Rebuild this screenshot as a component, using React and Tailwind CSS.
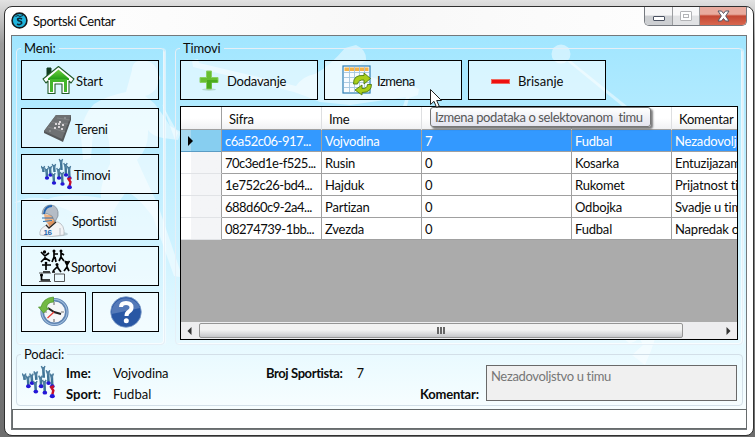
import React from "react";

const ROWS = [
  ["c6a52c06-917...", "Vojvodina", "7", "Fudbal", "Nezadovoljstvo u timu"],
  ["70c3ed1e-f525...", "Rusin", "0", "Kosarka", "Entuzijazam tima"],
  ["1e752c26-bd4...", "Hajduk", "0", "Rukomet", "Prijatnost tima"],
  ["688d60c9-2a4...", "Partizan", "0", "Odbojka", "Svadje u timu"],
  ["08274739-1bb...", "Zvezda", "0", "Fudbal", "Napredak od"],
];
const GRID = "grid grid-cols-[41px_100px_100px_150px_100px_100px]";

function Silhouettes() {
  return (
    <svg className="absolute inset-0" width="734" height="393" viewBox="12 36 734 393">
      <g fill="#fff" fillOpacity="0.48">
        <path d="M132 70 Q132 60 144 60 Q157 63 158 74 Q162 78 159 80 L156 89 Q150 95 145 96 L154 103 Q164 116 170 126 L181 132 L178 140 L163 138 Q152 136 148 130 Q149 148 137 160 Q145 178 158 205 L180 270 L180 277 L174 276 L153 217 Q136 194 126 192 Q116 205 107 224 Q88 222 68 210 Q41 198 14 203 Q27 195 48 199 Q66 192 101 198 Q100 182 110 164 Q111 140 104 124 L93 132 L91 158 L83 160 L81 136 Q82 116 94 104 Q106 96 126 92 Z" />
        <path d="M192 60 L198 59 L199 63 L296 86 Q303 76 315 74 Q330 66 345 48 L356 45 Q367 50 366 61 L354 68 Q374 82 407 84 L419 89 L418 95 L409 98 L407 106 L403 106 L406 97 L350 105 L320 102 L305 96 L294 92 L193 67 Z" />
        <circle cx="561" cy="54" r="9.5" />
        <path d="M567 61 L571 61 L627 106 L622 106 Z" />
        <path d="M640 339 L655 339 Q651 352 645 365 L632 355 L643 345 Z M624 339 L638 339 Q634 343 629 343 Z" />
        <path d="M169 117 L178 133 L175 140 L162 104 Z" />
      </g>
    </svg>
  );
}

function HomeIcon() {
  return (
    <svg width="33" height="30" viewBox="0 0 33 30">
      <defs>
        <linearGradient id="hg" x1="0" y1="0" x2="0" y2="1">
          <stop offset="0" stopColor="#6fd040" /><stop offset="1" stopColor="#1d9a13" />
        </linearGradient>
      </defs>
      <path d="M5 3 H9 V10 L5 13 Z" fill="#123f22" stroke="#123f22" />
      <path d="M6 16 V28.500 H13 V19 H20 V28.500 H27 V16 L29 18 L32 14 L16.500 1.500 L1 14 L4 18 Z" fill="#fff" stroke="#245b2b" strokeWidth="1.100" strokeLinejoin="round" />
      <path d="M16.500 4.500 L27 13.500 V15 H6 V13.500 Z" fill="url(#hg)" />
      <path d="M8 14 H25 V27 H22 V17 H11 V27 H8 Z" fill="#43b52b" />
    </svg>
  );
}

function FieldIcon() {
  return (
    <svg width="30" height="30" viewBox="0 0 30 30">
      <path d="M13 2 L28 2 L28 7 L20 29 L18 28 L1 20 V18 Z" fill="#55585a" />
      <path d="M13 2 L28 2 L19 26 L1 18 Z" fill="#6e7173" />
      <path d="M8 9 L25 11 M14 5 L27 7 M5 14 L22 19" stroke="#858889" strokeWidth=".8" />
      <g fill="#f3eef0">
        {[[13, 11], [17, 9], [20, 12], [16, 14], [12, 15], [19, 16], [16, 11]].map(([x, y]) => (
          <circle key={x + "-" + y} cx={x} cy={y} r="1.100" />
        ))}
      </g>
      <g fill="#aeb1b2"><circle cx="22" cy="5" r=".8" /><circle cx="7" cy="18" r=".8" /></g>
    </svg>
  );
}

function TeamIcon({ size = 32 }) {
  const people = [[2, 9, 14], [5.5, 11, 20], [9, 9, 17], [13, 7, 14], [12.5, 16, 25], [17.5, 11, 20], [20, 2, 12], [21, 15, 26], [24.5, 6, 17], [28, 9, 20]];
  return (
    <svg width={size} height={size} viewBox="0 0 32 32">
      {people.map(([x, a, b]) => (
        <g key={x + "-" + a}>
          <path d={`M${x} ${a} L${x + 0.5} ${b}`} stroke="#3d7396" strokeWidth="2.400" />
          <path d={`M${x - 1.8} ${a - 1} L${x} ${a + 3} L${x + 1.6} ${a - 1}`} fill="none" stroke="#4f7f9f" strokeWidth="1.400" />
          {b > 14 && <ellipse cx={x + 0.5} cy={b} rx="2.200" ry="1.800" fill="#2416d8" />}
        </g>
      ))}
      <path d="M30 20 L27.500 21 L29.500 24 L28.500 28" stroke="#c8102a" strokeWidth="2.300" fill="none" />
      <ellipse cx="28.500" cy="29.300" rx="2.400" ry="2" fill="#2416d8" />
    </svg>
  );
}

function PlayerIcon() {
  return (
    <svg width="30" height="33" viewBox="0 0 30 33">
      <ellipse cx="17" cy="30" rx="12" ry="2.500" fill="#8ea4ac" opacity=".45" />
      <path d="M1 31 Q0 25 6 22 L11 18 L19 18 Q26 21 25 31 Q12 34 1 31 Z" fill="#f2f3f5" stroke="#a9afb5" strokeWidth=".7" />
      <path d="M5 10 L6 17 Q10 22 14 20 L16 12 Z" fill="#efb181" />
      <path d="M9 19 L10 23 L16 18 V16 Z" fill="#de925d" />
      <path d="M7 21 L10 24 L17 18" fill="none" stroke="#2b2622" strokeWidth="1.300" />
      <path d="M3 10 Q4 1 12 1 Q20 2 19 12 L16 18 L13 12 Q8 8 3 10 Z" fill="#b4bcc6" stroke="#76818d" strokeWidth=".7" />
      <path d="M5 10 Q6 2 13 2" fill="none" stroke="#2264af" strokeWidth="1.800" />
      <path d="M3 14 H14 M4 17.500 L13 16.500" stroke="#2a72b5" strokeWidth="1.200" fill="none" />
      <text x="4.500" y="31" fontSize="8" fontWeight="700" fontFamily="Liberation Sans, sans-serif" fill="#1b65ac">16</text>
      <path d="M21 24 V31" stroke="#b8bec5" />
    </svg>
  );
}

function SportsIcon() {
  return (
    <svg width="32" height="34" viewBox="0 0 32 34">
      <g fill="none" stroke="#000" strokeWidth="1.700">
        <path d="M3 3 L7 7 L11 4 M7 6 L7 9 L3 13 M7 9 L12 12" />
        <path d="M16 2 V8 L14 13 M16 5 H20 M17 8 L18 13 M23 1 V8 L21 12 M23 4 L26 6 M23 8 L26 12" />
        <path d="M4 16 H13 M8 15 V21 M5 23 H12 M29 12 V18 L26 22 M27 12 L29 16 L31.500 12 M29 18 L31 22" />
        <path d="M15 22 L19 18 M19 16 L20 19 L23 23 M17 23 H14" />
        <path d="M3.500 25 V31 H12" />
      </g>
      <g fill="#000"><circle cx="6.500" cy="3" r="1.700" /><circle cx="16" cy="2" r="1.500" /><circle cx="23" cy="2" r="1.500" /><circle cx="8" cy="14" r="1.300" /><circle cx="19" cy="15.500" r="1.500" /><circle cx="3.500" cy="26" r="1.500" /></g>
      <path d="M1 24 H13 M1 32.500 H13 M16.500 25 H26.500 V32.500 H16.500 Z" fill="none" stroke="#444" strokeWidth=".9" />
    </svg>
  );
}

function ClockIcon() {
  return (
    <svg width="32" height="32" viewBox="0 0 32 32">
      <circle cx="16.500" cy="16" r="12.300" fill="#f4f6f8" stroke="#5c82b0" strokeWidth="3.600" />
      <circle cx="16.500" cy="16" r="12.600" fill="none" stroke="#9dbbdc" strokeWidth="1.200" />
      <path d="M16 6 V9 M16 23 V26 M6 16 H9 M23 16 H26" stroke="#777" strokeWidth="1.200" />
      <path d="M10 12 L16 16 L23 18" stroke="#222" strokeWidth="2" fill="none" />
      <path d="M16 16 L9.500 22" stroke="#e33b35" strokeWidth="1.300" />
      <path d="M15.500 1 V6 Q9 6 8.500 12 H11 L5.500 17 L.5 11 H3 Q5 2 15.500 1 Z" fill="#72b943" stroke="#4b9228" strokeWidth=".7" />
    </svg>
  );
}

function HelpIcon() {
  return (
    <svg width="32" height="32" viewBox="0 0 32 32">
      <circle cx="16" cy="16" r="15.300" fill="#2957a4" stroke="#7e9cc8" strokeWidth=".8" />
      <path d="M1.500 18 A14.700 14.700 0 0 1 30 12 Q20 14 1.500 18 Z" fill="#5479b8" />
      <path d="M11 11 Q11 7 16 7 Q21.500 7 21.500 11.500 Q21.500 14 19 15.500 Q16.500 17 16.500 20" fill="none" stroke="#fff" strokeWidth="4" />
      <circle cx="16.300" cy="24.700" r="2.500" fill="#fff" />
    </svg>
  );
}

function EditIcon() {
  return (
    <svg width="31" height="32" viewBox="0 0 31 32">
      <rect x="1" y="2" width="27" height="27" fill="#f8fcff" stroke="#2d7eb5" strokeWidth="1.200" />
      <path d="M2.500 3.500 H26.500 V7 H2.500 Z" fill="#f4b145" />
      <path d="M2 8.500 H27 M2 13.500 H27 M2 18.500 H27 M2 23.500 H27 M7.500 3 V28 M12.500 3 V28 M17.500 3 V28 M22.500 3 V28" stroke="#a5c6df" strokeWidth=".9" />
      <path d="M11.500 20 Q11 10.500 22 11.500 V9 L28.500 14.500 L22 20 V16 Q16.500 15.500 15.500 20 Z M29.500 20.500 Q29.500 28.500 20 28.500 V31 L13 26 L20 21 V24.500 Q25 25 25.500 20.500 Z" fill="#a9cf19" stroke="#4e7a10" strokeWidth=".9" strokeLinejoin="round" />
    </svg>
  );
}

function PlusIcon() {
  return (
    <svg width="20" height="21" viewBox="0 0 20 21">
      <ellipse cx="10" cy="19.500" rx="7" ry="1.200" fill="#8fb9a0" opacity=".5" />
      <path d="M7.500 1 H12.500 V7.500 H19 V12.500 H12.500 V19 H7.500 V12.500 H1 V7.500 H7.500 Z" fill="#67bf31" stroke="#8ad166" />
      <path d="M8 10 H18.500 V12.500 H12.500 V18.500 H8 Z" fill="#49ab1c" />
    </svg>
  );
}

function MenuButton({ className, children }) {
  return (
    <button className={`flex h-10 shrink-0 items-center border border-black bg-white/55 text-left [&>span]:pt-[3px] ${className}`}>
      {children}
    </button>
  );
}

function Group({ title, className, children }) {
  return (
    <fieldset className={`relative min-w-0 rounded-[4px] ${className}`}>
      <legend className="ml-[4px] h-4 px-[3px] leading-4 tracking-[-0.15px]">{title}</legend>
      {children}
    </fieldset>
  );
}

function Grid() {
  return (
    <div className="relative mt-[6px] flex h-[234px] w-[558px] flex-col overflow-hidden border border-black bg-[#ababab]">
      <div className={`${GRID} h-[23px] w-[591px] shrink-0 border-b border-[#a0a0a0] bg-gradient-to-b from-white from-50% to-[#f0f1f3] leading-[24px]`}>
        <div className="border-r border-[#a0a0a0]" />
        {["Sifra", "Ime", "", "", "Komentar"].map((h, i) => (
          <div key={i} className="border-r border-[#dedfe1] pl-[7px] tracking-[-0.2px]">{h}</div>
        ))}
      </div>
      {ROWS.map((r, i) => (
        <div key={r[0]} className={`${GRID} h-[22px] w-[591px] shrink-0 leading-[23px] ${i === 0 ? "bg-[#3399ff] text-white" : "bg-white"}`}>
          <div className={`flex items-center border-r border-b pl-[7px] ${i === 0 ? "border-[#5a9cc4] border-r-[#a0a0a0] bg-gradient-to-r from-[#a8daf2] from-25% to-[#87cef0] to-26%" : "border-[#e1e3e6] border-r-[#a0a0a0] bg-gradient-to-r from-white from-25% to-[#f4f5f7] to-26%"}`}>
            {i === 0 && <svg width="6" height="10"><path d="M0 0 L5 5 L0 10 Z" fill="#000" /></svg>}
          </div>
          {r.map((c, j) => (
            <div key={j} className={`h-[22px] overflow-hidden border-r border-b border-[#a0a0a0] whitespace-nowrap ${j === 0 ? "pl-[3px] tracking-[-0.5px]" : j === 4 ? "pl-[3px] tracking-[-0.2px]" : "pl-[3px] tracking-[-0.2px]"}`}>{c}</div>
          ))}
        </div>
      ))}
      <div className="mt-auto flex h-[17px] shrink-0 items-center bg-[#ededef]">
        <svg className="ml-[6px]" width="5" height="8"><path d="M4.500 0 V8 L.5 4 Z" fill="#333" /></svg>
        <div className="ml-[7px] flex h-[15px] w-[484px] items-center justify-center gap-px rounded-[2px] border border-[#959595] bg-gradient-to-b from-[#f2f2f2] from-45% to-[#c5c6c9] to-100%">
          <i className="h-[7px] w-[2px] bg-[#666]" /><i className="h-[7px] w-[2px] bg-[#666]" /><i className="h-[7px] w-[2px] bg-[#666]" />
        </div>
        <svg className="mr-[6px] ml-auto" width="5" height="8"><path d="M.5 0 V8 L4.500 4 Z" fill="#333" /></svg>
      </div>
    </div>
  );
}

function TitleBar() {
  return (
    <div className="flex h-7 shrink-0 items-start pl-[6px]">
      <svg className="mt-[5px]" width="17" height="17" viewBox="0 0 17 17">
        <circle cx="8.500" cy="8.500" r="7.400" fill="#20b5dd" stroke="#15191b" strokeWidth="1.600" />
        <path d="M11 7 Q8.500 5.500 6.700 7 Q6.500 8.500 8.500 9 Q11 9.500 10.500 11.500 Q8.500 13.500 6 12" fill="none" stroke="#092938" strokeWidth="1.700" />
        <path d="M4.500 4.500 L7 3.500 L9 4.500 L12 3.500" stroke="#092938" fill="none" />
      </svg>
      <span className="mt-[5px] ml-[5px] leading-[18px] tracking-[-0.4px]">Sportski Centar</span>
      <div className="mr-[6px] ml-auto flex h-[19px] w-[103px] overflow-hidden rounded-b-[5px] border border-t-0 border-[#767a80]">
        <div className="flex w-[28px] items-center justify-center border-r border-[#9b9da0] bg-gradient-to-b from-[#f6f6f7] from-45% to-[#cdcfd2] to-50%">
          <i className="mt-1 h-[5px] w-[12px] rounded-[1px] border border-[#4b5261] bg-white" />
        </div>
        <div className="flex w-[27px] items-center justify-center border-r border-[#9b9da0] bg-gradient-to-b from-[#f8f8f9] from-45% to-[#e1e2e4] to-50%">
          <div className="flex h-[10px] w-[12px] items-center justify-center rounded-[1px] border border-[#b3b4b7] bg-white"><i className="h-1 w-[6px] border border-[#b3b4b7]" /></div>
        </div>
        <div className="flex flex-1 items-center justify-center bg-gradient-to-b from-[#e9ab9e] from-40% via-[#c34733] via-50% to-[#d9674f]">
          <svg width="13" height="12" viewBox="0 0 13 12">
            <path d="M1 1 H4.500 L6.500 3.500 L8.500 1 H12 L8.700 6 L12 11 H8.500 L6.500 8.500 L4.500 11 H1 L4.300 6 Z" fill="#fff" stroke="#535666" />
          </svg>
        </div>
      </div>
    </div>
  );
}

export default function App() {
  return (
    <div className="relative h-[437px] w-[755px] overflow-hidden bg-gradient-to-b from-[#e2e2e2] via-[#9b9b9b] via-10% to-[#6d6d6d] pt-[6px] pl-1 font-['Lato','Open_Sans',sans-serif] text-[13px] text-[#0b0b0b]">
      <div className="flex h-[430px] w-[750px] flex-col rounded-[8px] border-[1.5px] border-[#303030] bg-gradient-to-r from-white via-[#f8f8f8] via-50% to-white">
        <TitleBar />
        <main className="relative ml-[6px] flex h-[395px] w-[736px] shrink-0 flex-col border border-[#73787b] bg-gradient-to-b from-[#a1e6ff] via-[#d4f4ff] via-60% to-[#fcffff]">
          <Silhouettes />
          <div className="relative flex pt-[4px] pl-[4px]">
            <Group title="Meni:" className="h-[305px] w-[149px] border border-[#e6eff6] shadow-[inset_-1px_-1px_0_rgba(255,255,255,0.7),1px_0_0_rgba(255,255,255,0.5)]">
              <div className="flex flex-col gap-[6px] pt-[4px] pl-1 tracking-[-0.35px]">
                <MenuButton className="mb-[2px] w-[138px] pl-[20px]"><HomeIcon /><span className="ml-px tracking-[-0.1px]">Start</span></MenuButton>
                <MenuButton className="w-[138px] pl-[21px]"><FieldIcon /><span className="ml-[2px]">Tereni</span></MenuButton>
                <MenuButton className="w-[138px] pl-[19px]"><TeamIcon /><span className="ml-px">Timovi</span></MenuButton>
                <MenuButton className="w-[138px] pl-[17px]"><PlayerIcon /><span className="ml-[3px]">Sportisti</span></MenuButton>
                <MenuButton className="w-[138px] pl-[16px]"><SportsIcon /><span className="ml-px">Sportovi</span></MenuButton>
                <div className="flex gap-[6px]">
                  <MenuButton className="w-[65px] justify-center"><ClockIcon /></MenuButton>
                  <MenuButton className="w-[67px] justify-center"><HelpIcon /></MenuButton>
                </div>
              </div>
            </Group>
            <Group title="Timovi" className="ml-[10px] h-[305px] w-[568px] border border-[#e6eff6] shadow-[inset_-1px_-1px_0_rgba(255,255,255,0.7),1px_0_0_rgba(255,255,255,0.5)]">
              <div className="pt-[4px] pl-1">
                <div className="flex gap-[6px]">
                  <MenuButton className="w-[138px] pl-[18px]"><PlusIcon /><span className="ml-[8px] tracking-[-0.2px]">Dodavanje</span></MenuButton>
                  <MenuButton className="w-[138px] pl-[17px]"><EditIcon /><span className="ml-[4px] tracking-[-0.5px]">Izmena</span></MenuButton>
                  <MenuButton className="w-[138px] pl-[22px]"><i className="mt-[3px] h-[5px] w-[19px] border border-[#ed6a60] bg-[#ee1010]" /><span className="ml-[8px]">Brisanje</span></MenuButton>
                </div>
                <Grid />
              </div>
            </Group>
          </div>
          <Group title="Podaci:" className="mt-px ml-[4px] h-[60px] w-[727px] border border-[#d3dfe8]">
            <div className="flex pl-[5px]">
              <div className="pt-[3px]"><TeamIcon size={34} /></div>
              <div className="mt-px ml-[10px] grid w-[200px] grid-cols-[47px_1fr] leading-[21px]">
                <b>Ime:</b><span className="tracking-[-0.1px]">Vojvodina</span><b>Sport:</b><span>Fudbal</span>
              </div>
              <div className="mt-px flex w-[154px] leading-[21px]"><b className="tracking-[-0.4px]">Broj Sportista:</b><span className="ml-[14px]">7</span></div>
              <b className="mt-[22px] w-[66px] leading-[21px] tracking-[-0.2px]">Komentar:</b>
              <div className="mt-[3px] h-[36px] w-[251px] border border-[#696969] bg-[#f0f0f0] pl-1 leading-[20px] tracking-[-0.35px] text-[#777]">Nezadovoljstvo u timu</div>
            </div>
          </Group>
          <div className="relative mt-[3px] h-[20px] w-[735px] shrink-0 border border-[#666b6c] bg-white/80" />
        </main>
      </div>
      <div className="absolute top-[107px] left-[430px] h-[20px] w-[221px] rounded-[3px] border border-[#767676] bg-gradient-to-b from-white to-[#e3e4ef] pl-[4px] leading-[18px] tracking-[-0.4px] whitespace-pre text-[#575757] shadow-[2px_2px_2px_rgba(0,0,0,0.5)]">Izmena podataka o selektovanom  timu</div>
      <svg className="absolute top-[89px] left-[430px]" width="13" height="20" viewBox="0 0 13 20">
        <path d="M.5 .5 V15.500 L4 12.300 L6.500 18.300 L9.200 17.200 L6.700 11.500 H11.500 Z" fill="#fff" stroke="#222" />
      </svg>
    </div>
  );
}
